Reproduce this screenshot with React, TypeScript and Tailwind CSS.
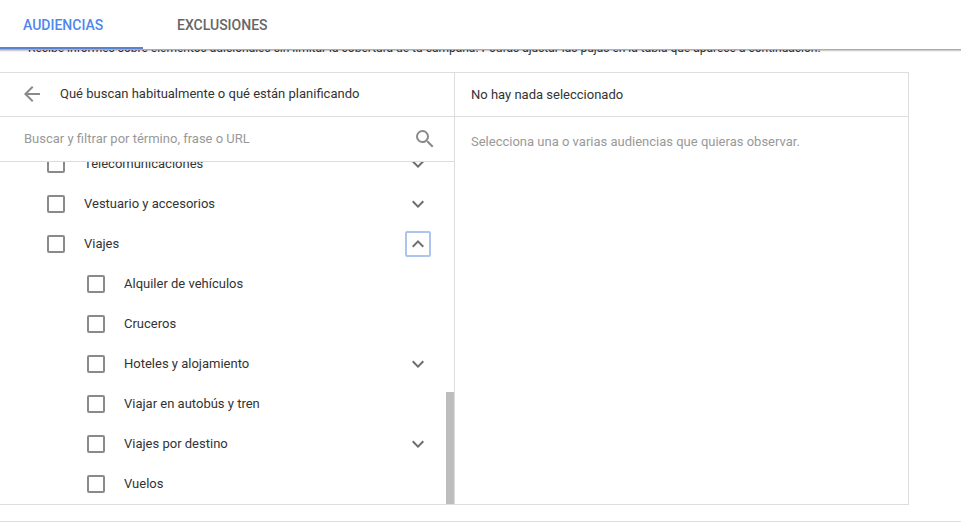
import React, { useState, type JSX } from 'react'
import { MdArrowBack, MdExpandLess, MdExpandMore, MdSearch } from 'react-icons/md';

interface Audience
{
    id: string;
    label: string;
    child?: boolean;
    expandable?: boolean;
    open?: boolean;
}

const audiences: Audience[] =
[
    { id: "telecom", label: "Telecomunicaciones", expandable: true },
    { id: "vestuario", label: "Vestuario y accesorios", expandable: true },
    { id: "viajes", label: "Viajes", expandable: true, open: true },
    { id: "alquiler", label: "Alquiler de vehículos", child: true },
    { id: "cruceros", label: "Cruceros", child: true },
    { id: "hoteles", label: "Hoteles y alojamiento", child: true, expandable: true },
    { id: "autobus", label: "Viajar en autobús y tren", child: true },
    { id: "destino", label: "Viajes por destino", child: true, expandable: true },
    { id: "vuelos", label: "Vuelos", child: true },
];

const AudienceRow: React.FC<{ item: Audience }> = ({ item }): JSX.Element =>
{
    return (
        <li className={`flex h-10 shrink-0 items-center justify-between pr-[23px] ${item.child ? "pl-[87px]" : "pl-[47px]"}`}>
            <div className="flex items-center">
                <input
                    id={item.id}
                    type="checkbox"
                    className="size-[18px] appearance-none rounded-xs border-2 border-[#8a8a8a] checked:bg-[#4285f4]"
                />
                <label htmlFor={item.id} className="pl-[19px]">{item.label}</label>
            </div>

            {item.expandable && (
                <button
                    type="button"
                    aria-label={item.label}
                    aria-expanded={!!item.open}
                    className={`flex size-[26px] items-center justify-center rounded-xs border-2 text-[#6e6e6e] ${item.open ? "border-[#adc4ee]" : "border-transparent"}`}
                >
                    {item.open ? <MdExpandLess className="size-6 shrink-0"/> : <MdExpandMore className="size-6 shrink-0"/>}
                </button>
            )}
        </li>
    )
}

const App: React.FC = (): JSX.Element =>
{
    const [search, setSearch] = useState<string>("");

    return (
        <div className="bg-white font-[Roboto,sans-serif] text-[13px] leading-5 text-[#333]">

            {/*Tabs*/}
            <header className="relative z-10 flex h-[49px] bg-white text-sm font-medium shadow-[0_1px_0_#adadad,0_2px_0_rgba(0,0,0,0.15),0_3px_1px_rgba(0,0,0,0.05)]">
                <button type="button" className="w-[143px] border-b-2 border-[#5c80d6] pt-[2px] pl-[23px] text-left text-[#4d87ee]">AUDIENCIAS</button>
                <button type="button" className="border-b-2 border-transparent px-[34px] pt-[2px] text-left text-[#666]">EXCLUSIONES</button>
            </header>

            {/*Intro text, scrolled under the tabs*/}
            <div className="flex h-[23px] items-end overflow-hidden px-7 pb-[14px]">
                <p className="whitespace-nowrap text-xs leading-5">
                    Recibe informes sobre elementos adicionales sin limitar la cobertura de tu campaña. Podrás ajustar las pujas en la tabla que aparece a continuación.
                </p>
            </div>

            <main className="border-b border-[#ddd] pb-4">
                <div className="grid max-w-[909px] grid-cols-2 border-y border-r border-[#ddd]">

                    <section>
                        <div className="flex h-11 items-center border-b border-[#ddd] pb-px pl-5">
                            <button type="button" aria-label="Atrás" className="text-[#8a8a8a]"><MdArrowBack className="size-6"/></button>
                            <h2 className="pl-4">Qué buscan habitualmente o qué están planificando</h2>
                        </div>

                        <div className="flex h-[45px] items-center border-b border-[#ddd] pr-[17px] pl-6">
                            <input
                                type="text"
                                aria-label="Buscar"
                                value={search}
                                onChange={(e) => setSearch(e.target.value)}
                                placeholder="Buscar y filtrar por término, frase o URL"
                                className="grow outline-none placeholder:text-[#999]"
                            />
                            <button type="button" aria-label="Buscar" className="text-[#8a8a8a]"><MdSearch className="size-6"/></button>
                        </div>

                        <div className="relative">
                            <ul className="flex h-[342px] flex-col justify-end overflow-hidden">
                                {audiences.map((item) => <AudienceRow key={item.id} item={item}/>)}
                            </ul>
                            <div className="absolute right-0 bottom-0 h-28 w-2 bg-[#bdbdbd]"/>
                        </div>
                    </section>

                    <section className="border-l border-[#ddd]">
                        <h2 className="flex h-11 items-center border-b border-[#ddd] px-4">No hay nada seleccionado</h2>
                        <p className="px-4 py-[15px] text-[#999]">Selecciona una o varias audiencias que quieras observar.</p>
                    </section>

                </div>
            </main>

        </div>
    )
}

export default App
